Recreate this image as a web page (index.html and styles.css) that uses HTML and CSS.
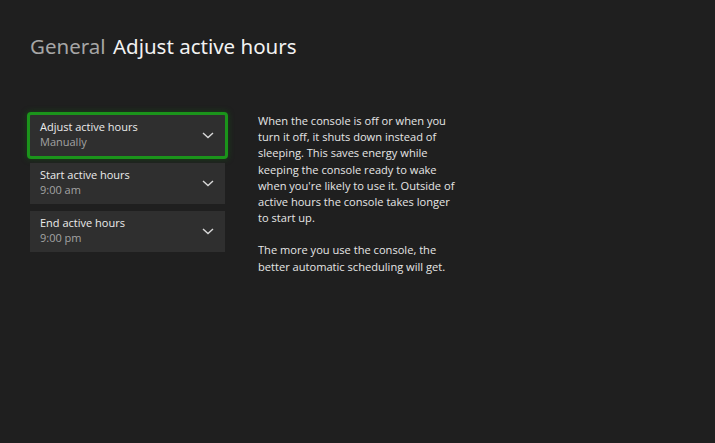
FILE: index.html
```html
<!DOCTYPE html>
<html lang="en">
<head>
    <meta charset="UTF-8">
    <meta name="viewport" content="width=device-width, initial-scale=1.0">
    <title>Adjust active hours</title>
    <link rel="stylesheet" href="styles.css">
</head>
<body>

<div class="page-title">
    <span class="section">General</span>
    <span class="heading">Adjust active hours</span>
</div>

<div class="content">
    <div class="option-list">
        <div class="option focused">
            <div class="option-text">
                <div class="option-name">Adjust active hours</div>
                <div class="option-value">Manually</div>
            </div>
            <svg class="chevron" width="12" height="7" viewBox="0 0 12 7"><path d="M1 1 L6 5.5 L11 1" fill="none" stroke="#d8d8d8" stroke-width="1.4"/></svg>
        </div>
        <div class="option">
            <div class="option-text">
                <div class="option-name">Start active hours</div>
                <div class="option-value">9:00 am</div>
            </div>
            <svg class="chevron" width="12" height="7" viewBox="0 0 12 7"><path d="M1 1 L6 5.5 L11 1" fill="none" stroke="#d8d8d8" stroke-width="1.4"/></svg>
        </div>
        <div class="option">
            <div class="option-text">
                <div class="option-name">End active hours</div>
                <div class="option-value">9:00 pm</div>
            </div>
            <svg class="chevron" width="12" height="7" viewBox="0 0 12 7"><path d="M1 1 L6 5.5 L11 1" fill="none" stroke="#d8d8d8" stroke-width="1.4"/></svg>
        </div>
    </div>

    <div class="description">
        <p>When the console is off or when you turn it off, it shuts down instead of sleeping. This saves energy while keeping the console ready to wake when you're likely to use it. Outside of active hours the console takes longer to start up.</p>
        <p>The more you use the console, the better automatic scheduling will get.</p>
    </div>
</div>

</body>
</html>
```

FILE: styles.css
```css
body {
    margin: 0;
    background-color: #1f1f1f;
    font-family: "Open Sans", "Noto Sans", sans-serif;
    color: #e8e8e8;
    height: 443px;
    overflow: hidden;
}
.page-title {
    padding: 32px 0 0 30px;
    font-size: 20.5px;
    line-height: 28px;
    font-family: "Noto Sans", sans-serif;
}
.page-title .section {
    color: #a6a6a6;
    margin-right: 2px;
}
.page-title .heading {
    color: #f2f2f2;
}
.content {
    display: flex;
    margin-top: 55px;
    padding-left: 30px;
}
.option-list {
    width: 195px;
    display: flex;
    flex-direction: column;
    gap: 7px;
}
.option {
    height: 41px;
    background-color: #2f2f2f;
    display: flex;
    align-items: center;
    justify-content: space-between;
    padding: 0 10px 0 10px;
    box-sizing: border-box;
}
.option-text {
    margin-bottom: 3px;
}
.option.focused {
    outline: 3px solid #1b941b;
    border-radius: 1px;
    box-shadow: 0 0 6px 3px rgba(20, 110, 20, 0.45);
}
.option-name {
    font-size: 11px;
    line-height: 15px;
    color: #ececec;
}
.option-value {
    font-size: 11px;
    line-height: 15px;
    color: #a3a3a3;
}
.chevron {
    margin-right: 1px;
}
.description {
    width: 205px;
    margin-left: 33px;
    margin-top: -2px;
    font-size: 11.1px;
    line-height: 16.2px;
    color: #e6e6e6;
}
.description p {
    margin: 0 0 16px 0;
}
```
